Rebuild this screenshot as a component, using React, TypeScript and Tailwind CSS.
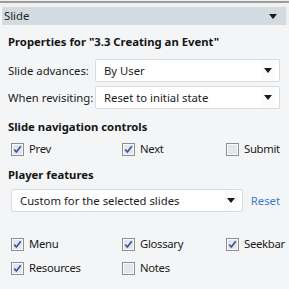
import type { ReactNode } from 'react';

const font = { fontFamily: '"Segoe UI", "Noto Sans", "Open Sans", sans-serif' };

function Arrow() {
	return (
		<svg width="8" height="5" viewBox="0 0 8 5" className="shrink-0">
			<path d="M0 0h8L4 5z" fill="#1a1a1a" />
		</svg>
	);
}

function Select({ value, className = '' }: { value: string; className?: string }) {
	return (
		<div
			className={`flex h-[23px] items-center justify-between rounded-[2px] border border-[#d9dcdf] bg-white pl-[8px] pr-[4px] ${className}`}
		>
			<span className="whitespace-nowrap text-[11.3px] leading-4 text-[#1b1b1b]">{value}</span>
			<span className="flex h-full w-[14px] items-center justify-center bg-[#fbfbfb]">
				<Arrow />
			</span>
		</div>
	);
}

function Check({ checked, label }: { checked?: boolean; label: string }) {
	return (
		<div className="flex h-4 items-center gap-[5px]">
			<span className="flex h-[13px] w-[13px] shrink-0 items-center justify-center border border-[#8e8f8f] bg-[#f2f3f6]">
				<span className="flex h-[11px] w-[11px] items-center justify-center border border-[#f8f9fb] bg-[#e3e6ec]">
					{checked && (
						<svg width="9" height="9" viewBox="0 0 9 9">
							<path d="M1.2 4.6 3.4 7 7.8 1.2" fill="none" stroke="#3e5597" strokeWidth="1.7" />
						</svg>
					)}
				</span>
			</span>
			<span className="whitespace-nowrap text-[11.3px] leading-4 tracking-[-0.3px] text-[#1b1b1b]">{label}</span>
		</div>
	);
}

function Heading({ children, className = '' }: { children: ReactNode; className?: string }) {
	return (
		<div className={`h-4 whitespace-nowrap text-[11.3px] font-bold leading-4 text-[#141414] ${className}`}>
			{children}
		</div>
	);
}

export default function App() {
	return (
		<div className="h-[289px] w-[289px] overflow-hidden bg-[#f4f5f6]" style={font}>
			<div className="h-px bg-[#ededed]" />
			<div className="h-[2px] bg-[#9c9c9c]" />
			<div className="h-[4px] bg-[#f0f1f2]" />

			{/* Panel header */}
			<div className="flex">
				<div className="ml-[2px] flex h-[18px] w-[284px] items-center justify-between bg-[#d3dae0] pl-[2px] pr-[9px]">
					<span className="text-[11.3px] leading-4 text-[#262626]">Slide</span>
					<Arrow />
				</div>
				<div className="flex-1 bg-[#eceef0]" />
			</div>

			<div className="pl-[8px] pr-[9px]">
				<Heading className="mt-[9px]">Properties for "3.3 Creating an Event"</Heading>

				<div className="mt-[9px] flex items-center">
					<span className="w-[87px] whitespace-nowrap text-[11.3px] leading-4 text-[#1b1b1b]">Slide advances:</span>
					<Select value="By User" className="flex-1" />
				</div>
				<div className="mt-[4px] flex items-center">
					<span className="w-[87px] whitespace-nowrap text-[11.3px] leading-4 text-[#1b1b1b]">When revisiting:</span>
					<Select value="Reset to initial state" className="flex-1" />
				</div>

				<Heading className="mt-[10px]">Slide navigation controls</Heading>
				<div className="mt-[6px] grid grid-cols-[111px_104px_auto] pl-[3px]">
					<Check checked label="Prev" />
					<Check checked label="Next" />
					<Check label="Submit" />
				</div>

				<Heading className="mt-[10px]">Player features</Heading>
				<div className="mt-[6px] flex items-center pl-[3px]">
					<Select value="Custom for the selected slides" className="w-[233px]" />
					<span className="ml-[8px] text-[11.3px] leading-4 text-[#3f7bd1]">Reset</span>
				</div>

				<div className="mt-[24px] grid grid-cols-[111px_104px_auto] gap-y-[8px] pl-[3px]">
					<Check checked label="Menu" />
					<Check checked label="Glossary" />
					<Check checked label="Seekbar" />
					<Check checked label="Resources" />
					<Check label="Notes" />
				</div>
			</div>
		</div>
	);
}
